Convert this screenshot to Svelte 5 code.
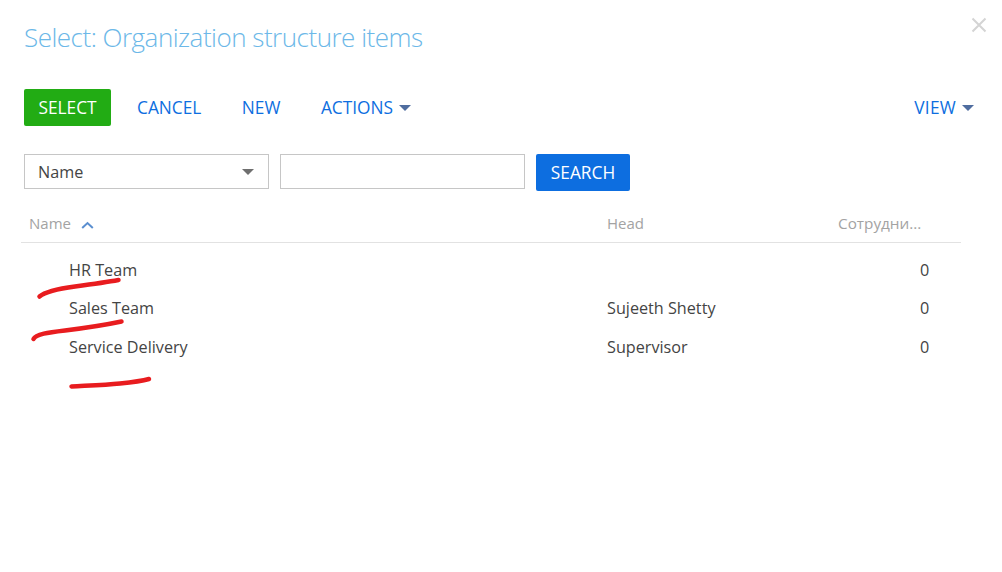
<script>
  const rows = [
    { name: 'HR Team', head: '', count: 0 },
    { name: 'Sales Team', head: 'Sujeeth Shetty', count: 0 },
    { name: 'Service Delivery', head: 'Supervisor', count: 0 }
  ];
</script>

<div class="page">
  <button class="close" aria-label="Close">
    <svg width="16" height="16" viewBox="0 0 16 16"><path d="M1.5 1.5 14.5 14.5M14.5 1.5 1.5 14.5" stroke="#d4d4d4" stroke-width="2" fill="none"/></svg>
  </button>

  <h1>Select: Organization structure items</h1>

  <div class="toolbar">
    <button class="btn primary">SELECT</button>
    <button class="link cancel">CANCEL</button>
    <button class="link new">NEW</button>
    <button class="link actions">ACTIONS<span class="caret"></span></button>
    <button class="link view">VIEW<span class="caret"></span></button>
  </div>

  <div class="filters">
    <div class="select"><span>Name</span><span class="caret grey"></span></div>
    <div class="input"></div>
    <button class="btn search">SEARCH</button>
  </div>

  <div class="grid">
    <div class="row header">
      <div class="c-name">Name
        <svg class="sort" width="13" height="8" viewBox="0 0 13 8"><path d="M1.2 7 6.5 2l5.3 5" stroke="#5b8fd0" stroke-width="2" fill="none"/></svg>
      </div>
      <div class="c-head">Head</div>
      <div class="c-count">Сотрудни...</div>
    </div>
    <div class="body">
      {#each rows as r}
        <div class="row item">
          <div class="c-name">{r.name}</div>
          <div class="c-head">{r.head}</div>
          <div class="c-count">{r.count}</div>
        </div>
      {/each}
    </div>
  </div>

  <svg class="ink" width="1002" height="572" viewBox="0 0 1002 572">
    <g stroke="#e81c1f" stroke-width="4.500" stroke-linecap="round" fill="none">
      <path d="M39.500 296.500C46 291 60 288.500 75 286.500C90 284.500 105 282.500 118.500 280"/>
      <path d="M33.500 339C36 334 48 332.500 65 330.500C85 328 105 325 121.500 321.500"/>
      <path d="M71.500 386.500C90 385.500 105 385 120 383.500C130 382.500 140 381.500 149 379"/>
    </g>
  </svg>
</div>

<style>
  :global(body) {
    margin: 0;
    background: #fff;
  }
  .page {
    position: relative;
    width: 1002px;
    height: 572px;
    overflow: hidden;
    font-family: "Open Sans", sans-serif;
    font-size: 16.2px;
    color: #444;
    box-sizing: border-box;
    padding-top: 20px;
  }
  button {
    font: inherit;
    border: 0;
    background: none;
    padding: 0;
  }
  h1 {
    margin: 0 0 0 24px;
    font-size: 26px;
    line-height: 34px;
    font-weight: 300;
    letter-spacing: -0.5px;
    color: #6cb8e8;
  }
  .close {
    position: absolute;
    top: 17px;
    left: 971px;
    width: 16px;
    height: 16px;
    line-height: 0;
  }
  .toolbar {
    display: flex;
    align-items: center;
    margin: 35px 28px 0 24px;
    height: 37px;
  }
  .toolbar button, .search {
    font-size: 17.3px;
  }
  .btn {
    color: #fff;
    border-radius: 2px;
    height: 37px;
  }
  .primary {
    background: #22ac14;
    width: 87px;
  }
  .link {
    color: #0d6ee0;
    display: flex;
    align-items: center;
  }
  .cancel { margin-left: 26px; }
  .new { margin-left: 40.500px; }
  .actions { margin-left: 40.500px; }
  .toolbar .view { margin-left: auto; letter-spacing: 0.250px; }
  .caret {
    display: inline-block;
    width: 0;
    height: 0;
    margin-left: 6px;
    margin-top: 1px;
    border-left: 6px solid transparent;
    border-right: 6px solid transparent;
    border-top: 6px solid #4f6d9f;
  }
  .caret.grey {
    border-top-color: #6f6f6f;
  }
  .filters {
    display: flex;
    gap: 11px;
    margin: 28px 0 0 24px;
    height: 35px;
    align-items: flex-start;
  }
  .select, .input {
    box-sizing: border-box;
    width: 245px;
    height: 35px;
    border: 1px solid #c6c6c6;
  }
  .select {
    display: flex;
    align-items: center;
    justify-content: space-between;
    padding: 0 14px 0 13px;
  }
  .search {
    background: #0d6ee0;
    width: 94px;
  }
  .grid {
    margin: 16px 0 0 21px;
    width: 940px;
  }
  .row {
    display: flex;
    align-items: center;
  }
  .header {
    height: 36px;
    font-size: 15px;
    color: #a3a3a3;
    border-bottom: 1px solid #e2e2e2;
    padding-bottom: 1px;
  }
  .c-name { width: 586px; padding-left: 8px; box-sizing: border-box; }
  .c-head { width: 231px; }
  .c-count { width: 123px; box-sizing: border-box; }
  .header .c-count { font-size: 15.300px; }
  .sort { margin-left: 6px; }
  .body { padding-top: 7.700px; }
  .item {
    height: 38.500px;
  }
  .item .c-name { padding-left: 48px; }
  .item .c-count { padding-left: 82px; }
  .ink {
    position: absolute;
    inset: 0;
    pointer-events: none;
  }
</style>
